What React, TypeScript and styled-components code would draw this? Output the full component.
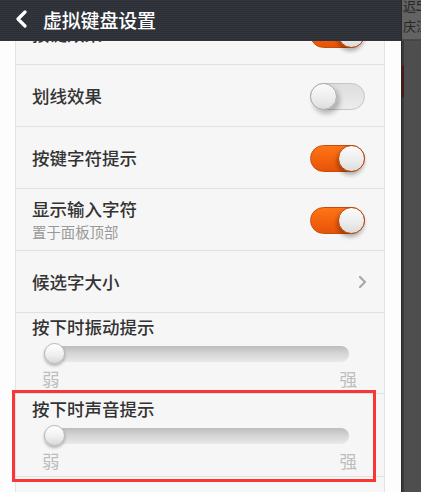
import React from "react";
import styled, { createGlobalStyle } from "styled-components";

const Global = createGlobalStyle`
  html, body { margin: 0; padding: 0; background: #fff; }
  body { font-family: "Noto Sans CJK SC", "Noto Sans", sans-serif; }
  * { box-sizing: border-box; }
`;

const Page = styled.div`
  display: flex;
  width: 421px;
  height: 492px;
  overflow: hidden;
`;

const Screen = styled.div`
  position: relative;
  width: 401px;
  flex: none;
  display: flex;
  flex-direction: column;
  background: #fdfdfd;
`;

const Header = styled.div`
  height: 41px;
  flex: none;
  display: flex;
  align-items: center;
  gap: 15px;
  padding: 0 0 3px 15px;
  background-color: #2f3139;
  background-image: repeating-linear-gradient(
      0deg,
      rgba(255, 255, 255, 0.025) 0 1px,
      transparent 1px 2px
    ),
    repeating-linear-gradient(90deg, rgba(0, 0, 0, 0.06) 0 1px, transparent 1px 2px);
  color: #fff;
  position: relative;
  z-index: 2;
`;

const Title = styled.span`
  font-size: 19px;
  font-weight: 500;
  line-height: 1;
  letter-spacing: -0.2px;
`;

const Viewport = styled.div`
  flex: 1;
  overflow: hidden;
  padding: 0 16px 0 15px;
`;

const Card = styled.div`
  margin-top: -38px;
  background: #f6f6f6;
  border-left: 1px solid #e3e3e3;
  border-right: 1px solid #e3e3e3;
  min-height: 600px;
`;

const Row = styled.div`
  height: 62px;
  display: flex;
  align-items: center;
  justify-content: space-between;
  padding: 0 19px 0 16px;
  border-bottom: 1px solid #e1e1e1;
`;

const TextCol = styled.div`
  display: flex;
  flex-direction: column;
`;

const Label = styled.span`
  font-size: 17.5px;
  font-weight: 500;
  line-height: 22px;
  color: #333;
`;

const Sub = styled.span`
  font-size: 14.4px;
  line-height: 20px;
  margin-top: 2px;
  color: #999;
`;

const Track = styled.div<{ $on: boolean }>`
  position: relative;
  width: 55px;
  height: 27px;
  border-radius: 14px;
  background: ${(p) =>
    p.$on
      ? "linear-gradient(180deg, #ff7417 0%, #f2600c 60%, #e4540a 100%)"
      : "linear-gradient(180deg, #dedede 0%, #ececec 100%)"};
  border: 1px solid ${(p) => (p.$on ? "#c84c08" : "#c9c3bf")};
  margin-top: 2px;
`;

const Knob = styled.div<{ $on: boolean }>`
  position: absolute;
  top: -1px;
  ${(p) => (p.$on ? "right: -1px;" : "left: -1px;")}
  width: 27px;
  height: 27px;
  border-radius: 50%;
  background: linear-gradient(180deg, #fbfbfb 0%, #ececec 60%, #dcdcdc 100%);
  border: 1px solid ${(p) => (p.$on ? "#b24406" : "#a9a9a9")};
  box-shadow: ${(p) =>
    p.$on ? "-1px 3px 4px rgba(0,0,0,0.3)" : "3px 4px 5px rgba(0,0,0,0.25)"};
`;

const Toggle = ({ on }: { on: boolean }) => (
  <Track $on={on}>
    <Knob $on={on} />
  </Track>
);

const Chevron = styled.svg`
  width: 9px;
  height: 14px;
  margin-right: -2px;
`;

const SliderRow = styled.div<{ $first?: boolean }>`
  height: ${(p) => (p.$first ? 81 : 83)}px;
  padding: ${(p) => (p.$first ? 3 : 4)}px 27px 0 16px;
  border-bottom: 1px solid #e1e1e1;
  display: flex;
  flex-direction: column;
`;

const SliderBody = styled.div`
  margin-left: 10px;
  margin-top: 8px;
  display: flex;
  flex-direction: column;
`;

const Rail = styled.div`
  position: relative;
  height: 16px;
  margin: 0 8px 0 2px;
  border-radius: 8px;
  background: linear-gradient(180deg, #bdbdbd 0%, #d4d4d4 45%, #e9e9e9 100%);
`;

const Thumb = styled.div`
  position: absolute;
  left: 0;
  top: -3px;
  width: 21px;
  height: 21px;
  border-radius: 50%;
  background: linear-gradient(180deg, #ffffff 0%, #eeeeee 60%, #d8d8d8 100%);
  border: 1px solid #b8b8b8;
  box-shadow: 0 2px 3px rgba(0, 0, 0, 0.28);
`;

const Ends = styled.div`
  display: flex;
  justify-content: space-between;
  margin-top: 6px;
  font-size: 17.5px;
  line-height: 22px;
  color: #bdbdbd;
`;

const Slider = ({ label, first }: { label: string; first?: boolean }) => (
  <SliderRow $first={first}>
    <Label>{label}</Label>
    <SliderBody>
      <Rail>
        <Thumb />
      </Rail>
      <Ends>
        <span>弱</span>
        <span>强</span>
      </Ends>
    </SliderBody>
  </SliderRow>
);

const Highlight = styled.div`
  position: absolute;
  left: 12px;
  top: 390px;
  width: 364px;
  height: 92px;
  border: 3px solid #f93535;
  pointer-events: none;
`;

const Side = styled.div`
  flex: 1;
  display: flex;
  flex-direction: column;
  background: #555;
  border-left: 1px solid #2a2a2a;
  position: relative;
`;

const SideTop = styled.div`
  height: 41px;
  flex: none;
  background: #636363;
  border-bottom: 1px solid #444;
  display: flex;
  flex-direction: column;
  overflow: hidden;
  font-size: 13px;
  color: #262626;
`;

const SideLine = styled.div<{ $h: number }>`
  height: ${(p) => p.$h}px;
  line-height: ${(p) => p.$h}px;
  white-space: nowrap;
  border-bottom: 1px solid #4a4a4a;
  padding-left: 1px;
`;

const SideBody = styled.div`
  flex: 1;
  background: #4e4e4e;
  border-left: 2px solid #3a3a3a;
`;

const Accent = styled.div`
  position: absolute;
  left: 0;
  top: 65px;
  width: 2px;
  height: 32px;
  background: #4a1c14;
`;

export default function App() {
  return (
    <Page>
      <Global />
      <Screen>
        <Header>
          <svg width="13" height="18" viewBox="0 0 13 18">
            <polyline
              points="10,2 3,9 10,16"
              fill="none"
              stroke="#fff"
              strokeWidth="3.2"
              strokeLinecap="round"
              strokeLinejoin="round"
            />
          </svg>
          <Title>虚拟键盘设置</Title>
        </Header>
        <Viewport>
          <Card>
            <Row>
              <Label>按键效果</Label>
              <Toggle on />
            </Row>
            <Row>
              <Label>划线效果</Label>
              <Toggle on={false} />
            </Row>
            <Row>
              <Label>按键字符提示</Label>
              <Toggle on />
            </Row>
            <Row>
              <TextCol>
                <Label>显示输入字符</Label>
                <Sub>置于面板顶部</Sub>
              </TextCol>
              <Toggle on />
            </Row>
            <Row>
              <Label>候选字大小</Label>
              <Chevron viewBox="0 0 9 14">
                <polyline
                  points="2,2 7,7 2,12"
                  fill="none"
                  stroke="#a8a8a8"
                  strokeWidth="2.2"
                  strokeLinecap="round"
                  strokeLinejoin="round"
                />
              </Chevron>
            </Row>
            <Slider label="按下时振动提示" first />
            <Slider label="按下时声音提示" />
          </Card>
        </Viewport>
        <Highlight />
      </Screen>
      <Side>
        <SideTop>
          <SideLine $h={11}>迟5</SideLine>
          <SideLine $h={29}>庆江</SideLine>
        </SideTop>
        <SideBody />
        <Accent />
      </Side>
    </Page>
  );
}
